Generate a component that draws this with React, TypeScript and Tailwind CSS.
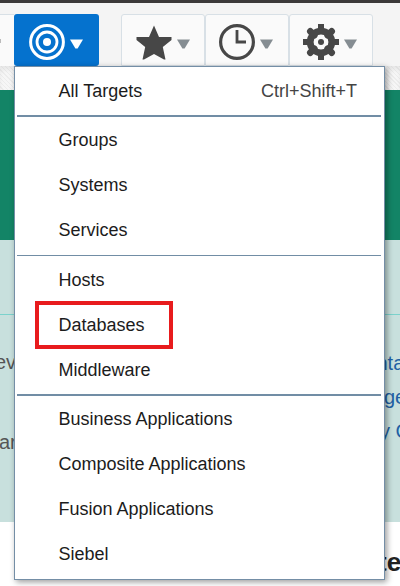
import React from 'react';

type Entry = { label: string; shortcut?: string; marked?: boolean };

const groups: Entry[][] = [
  [{ label: 'Groups' }, { label: 'Systems' }, { label: 'Services' }],
  [{ label: 'Hosts' }, { label: 'Databases', marked: true }, { label: 'Middleware' }],
  [
    { label: 'Business Applications' },
    { label: 'Composite Applications' },
    { label: 'Fusion Applications' },
    { label: 'Siebel' },
  ],
];

function Caret({ className }: { className: string }) {
  return (
    <svg width="13" height="10" viewBox="0 0 13 10" className={className}>
      <path d="M0 0.5h13L7.6 9.5H5.4z" fill="currentColor" />
    </svg>
  );
}

function TargetIcon() {
  return (
    <svg width="36" height="36" viewBox="0 0 36 36" fill="none" stroke="white">
      <circle cx="18" cy="18" r="16.4" strokeWidth="3" />
      <circle cx="18" cy="18" r="10" strokeWidth="2.8" />
      <circle cx="18" cy="18" r="4" fill="white" stroke="none" />
    </svg>
  );
}

function StarIcon() {
  return (
    <svg width="36" height="36" viewBox="0 0 36 36" fill="#474747">
      <path d="M18 1.5 23 13H35.5V16L26.8 23 29.5 35.5H28L18 30 8 35.5H6.5L9.2 23 .5 16V13H13z" />
    </svg>
  );
}

function ClockIcon() {
  return (
    <svg width="36" height="36" viewBox="0 0 36 36" fill="none" stroke="#474747">
      <circle cx="18" cy="18" r="16.4" strokeWidth="3.2" />
      <path d="M18 6v12h9" strokeWidth="2.8" />
    </svg>
  );
}

function GearIcon() {
  return (
    <svg width="36" height="36" viewBox="0 0 36 36" fill="none" stroke="#474747">
      <g strokeWidth="6">
        <path d="M18 0v8M18 28v8M0 18h8M28 18h8" />
        <path d="m7.3 7.3 4 4M24.7 24.7l4 4M28.7 7.3l-4 4M11.3 24.7l-4 4" strokeWidth="6.6" strokeLinecap="round" />
      </g>
      <circle cx="18" cy="18" r="10.8" strokeWidth="6.8" />
      <circle cx="18" cy="18" r="3" fill="#474747" stroke="none" />
    </svg>
  );
}

function MenuRow({ label, shortcut, marked }: Entry) {
  return (
    <div className="relative flex h-[45px] items-center justify-between pr-[27px] pl-[43.5px]">
      <span>{label}</span>
      {shortcut && <span className="text-[#444]">{shortcut}</span>}
      {marked && (
        <div className="absolute top-[-2px] left-5 h-[48px] w-[138px] border-4 border-[#e81b1d]" />
      )}
    </div>
  );
}

export default function App() {
  return (
    <div className="relative h-[586px] w-[400px] overflow-hidden bg-white font-['Liberation_Sans',Arial,sans-serif] text-lg leading-6 text-[#1c1c1c]">
      <header className="flex h-[66px] border-t-[3px] border-[#3b3939] bg-[#f4f4f4] pt-[11px]">
        <div className="flex h-[52px] w-3.5 items-center border-t border-[#d8e0e6] bg-[#fafafa]">
          <span className="h-1 w-px bg-[#bbb]" />
        </div>
        <button className="flex w-[85px] items-center rounded-[3px] bg-[#0572ce] pt-1 pl-[15px]">
          <TargetIcon />
          <Caret className="mt-1 ml-[5px] text-white" />
        </button>
        <div className="ml-[22px] flex">
          <button className="flex w-[84px] items-center rounded-t-[3px] border border-[#d8e0e6] bg-[#fafafa] pt-1 pl-[14px]">
            <StarIcon />
            <Caret className="mt-1 ml-[5px] text-[#858d92]" />
          </button>
          <button className="flex w-[84px] items-center rounded-t-[3px] border border-[#d8e0e6] bg-[#fafafa] pt-1 pl-[13px]">
            <ClockIcon />
            <Caret className="mt-1 ml-[5px] text-[#858d92]" />
          </button>
          <button className="flex w-[84px] items-center rounded-t-[3px] border border-[#d8e0e6] bg-[#fafafa] pt-1 pl-[13px]">
            <GearIcon />
            <Caret className="mt-1 ml-[5px] text-[#858d92]" />
          </button>
        </div>
      </header>
      <div className="h-6 bg-[repeating-linear-gradient(45deg,#f6f6f6_0px,#f6f6f6_2px,#ececec_2px,#ececec_3px)] shadow-[inset_0_4px_4px_rgba(0,0,0,0.06)]" />
      <div className="h-[150px] bg-[#138466]" />
      <main className="h-[282px] bg-[#c8e0dd] pt-[74px]">
        <div className="flex h-[208px] justify-between border-t border-[#7bd2cc] text-xl leading-[34px]">
          <div className="w-3.5 pt-[30px] whitespace-nowrap text-[#555]">
            <div className="-ml-[5px]">ev</div>
            <div className="mt-[46px] -ml-px">ar</div>
          </div>
          <div className="w-[26px] pt-[31px] whitespace-nowrap text-[#1f60a4]">
            <div className="ml-[2.5px]">nta</div>
            <div className="ml-2.5">ge</div>
            <div className="ml-1.5">y C</div>
          </div>
        </div>
      </main>
      <footer className="flex h-[64px] justify-end pt-6 text-[26px] leading-8 font-bold text-[#222]">
        <span className="w-[22px] whitespace-nowrap">te</span>
      </footer>

      <nav className="absolute top-[66px] left-3.5 h-[514px] w-[371px] border border-[#748ea6] bg-white pt-[1.5px] shadow-[2px_2px_6px_rgba(0,0,0,0.4)]">
        <MenuRow label="All Targets" shortcut="Ctrl+Shift+T" />
        <div className="mt-[1.5px] mr-[3px] mb-[0.5px] ml-0.5 h-0.5 bg-[#718da5]" />
        {groups.map((group, index) => (
          <React.Fragment key={group[0].label}>
            {index === 1 && <div className="mt-[2.5px] mr-[3px] mb-[1.5px] ml-0.5 h-px bg-[#718da5]" />}
            {index === 2 && <div className="mt-[1.5px] mr-[3px] mb-[0.5px] ml-0.5 h-0.5 bg-[#718da5]" />}
            {group.map((entry) => (
              <MenuRow key={entry.label} {...entry} />
            ))}
          </React.Fragment>
        ))}
      </nav>
    </div>
  );
}
